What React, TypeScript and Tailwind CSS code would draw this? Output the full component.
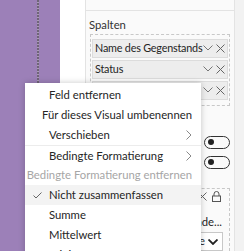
import React from "react";

const font = { fontFamily: 'Lato, "Noto Sans", sans-serif' };

function ChevDown({ bold = false }: { bold?: boolean }) {
  return (
    <svg width="10" height="6" viewBox="0 0 10 6" className="shrink-0">
      <path d="M0.5 0.5 L5 5 L9.5 0.5" fill="none" stroke={bold ? "#222" : "#777"} strokeWidth={bold ? 1.8 : 1} />
    </svg>
  );
}

function XIcon() {
  return (
    <svg width="9" height="9" viewBox="0 0 9 9" className="shrink-0">
      <path d="M0.5 0.5 L8.5 8.5 M8.5 0.5 L0.5 8.5" fill="none" stroke="#666" strokeWidth="1" />
    </svg>
  );
}

function ChevRight() {
  return (
    <svg width="6" height="10" viewBox="0 0 6 10" className="shrink-0">
      <path d="M0.5 0.5 L5 5 L0.5 9.5" fill="none" stroke="#888" strokeWidth="1" />
    </svg>
  );
}

function Chip({ label }: { label: string }) {
  return (
    <div className="h-[19px] flex items-center bg-[#ededed] border border-[#dcdcdc] pl-[2px] pr-[2px] text-[10.8px] tracking-[-0.2px] text-[#252525] leading-none">
      <span className="whitespace-nowrap">{label}</span>
      <div className="flex-1" />
      <div className="flex items-center gap-[3px] pl-[1px]">
        <ChevDown />
        <XIcon />
      </div>
    </div>
  );
}

function Toggle() {
  return (
    <div className="w-[26px] h-[13px] rounded-full border border-[#333] flex items-center pl-[3px]">
      <div className="w-[6px] h-[6px] rounded-full bg-[#222]" />
    </div>
  );
}

function MenuItem({
  label,
  chevron,
  disabled,
  checked,
  sep,
}: {
  label: string;
  chevron?: boolean;
  disabled?: boolean;
  checked?: boolean;
  sep?: boolean;
}) {
  return (
    <div
      className={
        "h-[20px] flex items-center pr-[9px] text-[11.3px] leading-none " +
        (checked ? "bg-[#f3f3f3] " : "") +
        (sep ? "border-t border-[#ececec] " : "") +
        (disabled ? "text-[#a6a6a6]" : "text-[#252525]")
      }
    >
      <div className="w-[24px] flex justify-center">
        {checked && (
          <svg width="9" height="7" viewBox="0 0 9 7">
            <path d="M0.5 3.5 L3 6 L8.5 0.5" fill="none" stroke="#666" strokeWidth="1" />
          </svg>
        )}
      </div>
      <span className="flex-1 whitespace-nowrap">{label}</span>
      {chevron && <ChevRight />}
    </div>
  );
}

export default function App() {
  return (
    <div className="relative w-[244px] h-[251px] overflow-hidden bg-white flex" style={font}>
      <div className="w-[60px] h-full bg-[#9c80b8] flex">
        <div className="ml-[37px] w-[2px] h-full bg-[repeating-linear-gradient(to_bottom,#6f6478_0_2px,#a99bb5_2px_3px)]" />
      </div>
      <div className="w-[25px]" />
      <div className="w-[149px] h-full border-l border-[#e3e3e3] bg-[#fafafa] flex flex-col">
        <div className="h-[11px] border-b border-[#e3e3e3]" />
        <div className="pl-[3px] mt-[6px] h-[15px] text-[11.3px] text-[#333] leading-none flex items-center">Spalten</div>
        <div className="ml-[4px] mr-[4px] mt-[2px] border border-dashed border-[#c8c8c8] px-[1px] pt-[4px] pb-[5px] flex flex-col gap-[2px]">
          <Chip label="Name des Gegenstands" />
          <Chip label="Status" />
          <Chip label="Priorität" />
        </div>
        <div className="mt-[30px] flex justify-end pr-[4px]">
          <Toggle />
        </div>
        <div className="mt-[7px] flex justify-end pr-[4px]">
          <Toggle />
        </div>
        <div className="ml-[4px] mr-[4px] mt-[19px] border border-dashed border-[#c8c8c8] border-b-0 flex-1 px-[1px] pt-[1px] flex flex-col">
          <div className="h-[14px] flex items-center justify-end gap-[5px] pr-[7px]">
            <XIcon />
            <svg width="9" height="11" viewBox="0 0 9 11">
              <path d="M2 5 V3 A2.5 2.5 0 0 1 7 3 V5" fill="none" stroke="#555" strokeWidth="1" />
              <rect x="0.5" y="5" width="8" height="5.5" fill="none" stroke="#555" strokeWidth="1" />
            </svg>
          </div>
          <div className="mt-[12px] text-[11.3px] text-[#252525] leading-none flex justify-end pr-[6px] whitespace-nowrap">Legende...</div>
          <div className="mt-[5px] ml-[90px] mr-[5px] h-[19px] border border-[#c8c8c8] bg-white flex items-center justify-end pr-[4px] gap-[3px] text-[11.3px] text-[#252525]">
            <span>Seite</span>
            <ChevDown bold />
          </div>
        </div>
      </div>
      <div className="flex-1 bg-[#f2f2f2] border-l border-[#e3e3e3]" />

      <div className="absolute left-[25px] top-[83px] w-[176px] h-[200px] bg-white shadow-[0_0_6px_rgba(0,0,0,0.22)] pt-[2px]">
        <MenuItem label="Feld entfernen" />
        <MenuItem label="Für dieses Visual umbenennen" />
        <MenuItem label="Verschieben" chevron />
        <MenuItem label="Bedingte Formatierung" chevron sep />
        <MenuItem label="Bedingte Formatierung entfernen" disabled />
        <MenuItem label="Nicht zusammenfassen" checked />
        <MenuItem label="Summe" />
        <MenuItem label="Mittelwert" />
        <MenuItem label="Minimum" />
      </div>
    </div>
  );
}
